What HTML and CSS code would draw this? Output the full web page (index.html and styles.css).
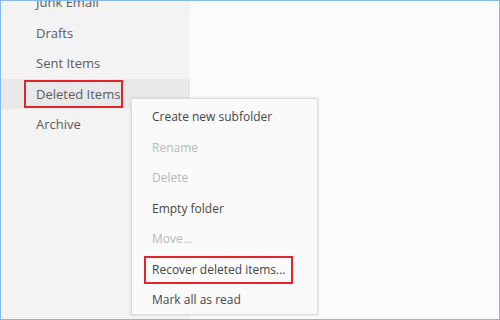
FILE: index.html
```html
<!DOCTYPE html>
<html lang="en">
<head>
    <meta charset="UTF-8">
    <title>Folder menu</title>
    <link rel="stylesheet" href="styles.css">
</head>
<body>
    <div id="janela">
        <div id="pastas">
            <ul id="lista-pastas">
                <li>Junk Email</li>
                <li>Drafts</li>
                <li>Sent Items</li>
                <li class="ativo"><span class="marcado">Deleted Items</span></li>
                <li>Archive</li>
            </ul>
        </div>
        <div id="conteudo"></div>

        <ul id="menu">
            <li>Create new subfolder</li>
            <li class="desativado">Rename</li>
            <li class="desativado">Delete</li>
            <li>Empty folder</li>
            <li class="desativado">Move...</li>
            <li><span class="marcado">Recover deleted items...</span></li>
            <li>Mark all as read</li>
        </ul>
    </div>
</body>
</html>
```

FILE: styles.css
```css
* {
    box-sizing: border-box;
}

body {
    margin: 0;
    font-family: "Open Sans", "Noto Sans", sans-serif;
    font-size: 13px;
}

#janela {
    position: relative;
    display: flex;
    width: 500px;
    height: 320px;
    border: 1px solid #8ab9e8;
    overflow: hidden;
    background-color: #fbfbfb;
}

#pastas {
    width: 189px;
    background-color: #f3f3f3;
}

#conteudo {
    flex-grow: 1;
}

#lista-pastas {
    list-style: none;
    margin: -14px 0 0 0;
    padding: 0;
}

#lista-pastas li {
    height: 30.5px;
    line-height: 30.5px;
    padding-left: 35px;
    color: #5c5c5c;
}

#lista-pastas li.ativo {
    background-color: #e9e9e9;
    padding-left: 23px;
}

#lista-pastas li.ativo .marcado {
    padding: 0 1px 0 10px;
}

.marcado {
    display: inline-block;
    border: 2px solid #e2242c;
    line-height: 24px;
}

#menu {
    position: absolute;
    left: 130px;
    top: 97px;
    width: 187px;
    height: 217px;
    list-style: none;
    margin: 0;
    padding: 3px 0 0 0;
    background-color: #fafafa;
    border: 1px solid #dcdcdc;
    box-shadow: 0 0 3px rgba(0, 0, 0, .12);
    font-size: 12px;
}

#menu li {
    height: 30.5px;
    line-height: 30.5px;
    padding-left: 20px;
    color: #454545;
}

#menu li.desativado {
    color: #b8b8b8;
}

#menu li .marcado {
    margin-left: -8px;
    padding: 0 5px 0 6px;
}
```
